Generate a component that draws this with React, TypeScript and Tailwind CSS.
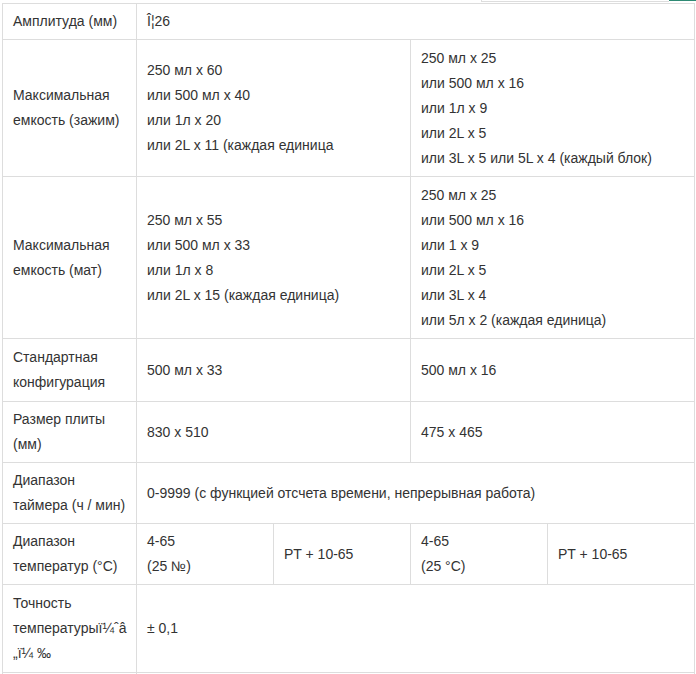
import React from "react";

const td = "border border-[#dddddd] px-[10px] py-[5px] align-middle";

function Lines({ items }: { items: string[] }) {
  return (
    <>
      {items.map((t, i) => (
        <div key={i}>{t}</div>
      ))}
    </>
  );
}

export default function App() {
  return (
    <div
      className="bg-white w-[696px] h-[674px] overflow-hidden text-[14px] leading-[25px] text-[#333333]"
      style={{ fontFamily: '"Liberation Sans", Arial, sans-serif' }}
    >
      <div className="h-[3px] flex">
        <div className="ml-[481px] w-[188px] h-[2px] border-b border-l border-[#dddddd]" />
        <div className="w-[27px] h-[1px] bg-[#2f8a74]" />
      </div>
      <table className="ml-[2px] w-[692px] table-fixed border-collapse">
        <colgroup>
          <col className="w-[134px]" />
          <col className="w-[137px]" />
          <col className="w-[137px]" />
          <col className="w-[137px]" />
          <col className="w-[147px]" />
        </colgroup>
        <tbody>
          <tr className="h-[36px]">
            <td className={td}>Амплитуда (мм)</td>
            <td className={td} colSpan={4}>Î¦26</td>
          </tr>
          <tr className="h-[137px]">
            <td className={td}>Максимальная емкость (зажим)</td>
            <td className={td} colSpan={2}>
              <Lines items={["250 мл x 60", "или 500 мл x 40", "или 1л x 20", "или 2L x 11 (каждая единица"]} />
            </td>
            <td className={td} colSpan={2}>
              <Lines
                items={["250 мл x 25", "или 500 мл x 16", "или 1л x 9", "или 2L x 5", "или 3L x 5 или 5L x 4 (каждый блок)"]}
              />
            </td>
          </tr>
          <tr className="h-[162px]">
            <td className={td}>Максимальная емкость (мат)</td>
            <td className={td} colSpan={2}>
              <Lines items={["250 мл x 55", "или 500 мл x 33", "или 1л x 8", "или 2L x 15 (каждая единица)"]} />
            </td>
            <td className={td} colSpan={2}>
              <Lines
                items={["250 мл x 25", "или 500 мл x 16", "или 1 x 9", "или 2L x 5", "или 3L x 4", "или 5л x 2 (каждая единица)"]}
              />
            </td>
          </tr>
          <tr className="h-[63px]">
            <td className={td}>Стандартная конфигурация</td>
            <td className={td} colSpan={2}>500 мл x 33</td>
            <td className={td} colSpan={2}>500 мл x 16</td>
          </tr>
          <tr className="h-[61px]">
            <td className={td}>Размер плиты (мм)</td>
            <td className={td} colSpan={2}>830 x 510</td>
            <td className={td} colSpan={2}>475 x 465</td>
          </tr>
          <tr className="h-[61px]">
            <td className={td}>Диапазон таймера (ч / мин)</td>
            <td className={td} colSpan={4}>0-9999 (с функцией отсчета времени, непрерывная работа)</td>
          </tr>
          <tr className="h-[61px]">
            <td className={td}>Диапазон температур (°C)</td>
            <td className={td}>
              <Lines items={["4-65", "(25 №)"]} />
            </td>
            <td className={td}>PT + 10-65</td>
            <td className={td}>
              <Lines items={["4-65", "(25 °C)"]} />
            </td>
            <td className={td}>PT + 10-65</td>
          </tr>
          <tr className="h-[88px]">
            <td className={td}>
              Точность температурыï¼ˆâ
              <br />
              „ï¼ ‰
            </td>
            <td className={td} colSpan={4}>± 0,1</td>
          </tr>
          <tr className="h-[40px]">
            <td className={td}></td>
            <td className={td} colSpan={4}></td>
          </tr>
        </tbody>
      </table>
    </div>
  );
}
